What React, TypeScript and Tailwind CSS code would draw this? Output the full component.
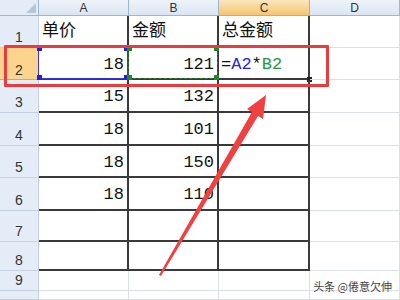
import React from 'react';

const cols = ['A', 'B', 'C', 'D'];
const rowHeights = [32, 32, 33, 33, 32, 33, 31, 29, 20, 9];

// содержимое ячеек A..C
const data: Record<number, string[]> = {
  1: ['单价', '金额', '总金额'],
  2: ['18', '121', ''],
  3: ['15', '132', ''],
  4: ['18', '101', ''],
  5: ['18', '150', ''],
  6: ['18', '110', ''],
};

const mono = { fontFamily: '"Liberation Mono", "DejaVu Sans Mono", monospace' };
const cjk = { fontFamily: '"Noto Sans CJK SC", "Noto Sans", sans-serif' };
const head = { fontFamily: '"Liberation Sans", Arial, sans-serif' };

function Handle({ className }: { className: string }) {
  return <span className={`absolute h-[5px] w-[5px] ${className}`} />;
}

// рамка ссылки из формулы, лежит поверх ячейки
function RefFrame({ frame, dot }: { frame: string; dot: string }) {
  return (
    <span className={`pointer-events-none absolute inset-[-1px] ${frame}`}>
      <Handle className={`left-[-2px] top-[-2px] ${dot}`} />
      <Handle className={`right-[-2px] top-[-2px] ${dot}`} />
      <Handle className={`left-[-2px] bottom-[-2px] ${dot}`} />
      <Handle className={`right-[-2px] bottom-[-2px] ${dot}`} />
    </span>
  );
}

export default function App() {
  return (
    <div className="relative h-[300px] w-[400px] overflow-hidden bg-white">
      <div
        className="grid grid-cols-[39px_90px_90px_91px_90px]"
        style={{ gridTemplateRows: `16px ${rowHeights.map((h) => h + 'px').join(' ')}` }}
      >
        <div className="flex items-end justify-end border-b border-r border-[#9eb6ce] bg-[#e4ecf7] p-[2px]">
          <svg width="10" height="10" viewBox="0 0 10 10">
            <polygon points="10,0 10,10 0,10" fill="#b4c6dc" />
          </svg>
        </div>
        {cols.map((c) => (
          <div
            key={c}
            className={
              c === 'C'
                ? 'flex items-center justify-center border-b border-r border-[#e0a74a] bg-gradient-to-b from-[#fbe6bd] to-[#f6c56e] text-[12px] text-[#333]'
                : 'flex items-center justify-center border-b border-r border-[#9eb6ce] bg-gradient-to-b from-[#eef3fa] to-[#dbe5f2] text-[12px] text-[#333]'
            }
            style={head}
          >
            {c}
          </div>
        ))}

        {rowHeights.map((_, i) => {
          const r = i + 1;
          const row = data[r];
          return (
            <React.Fragment key={r}>
              <div
                className={
                  r === 2
                    ? 'flex items-end justify-center overflow-hidden border-b border-r border-[#e0a74a] bg-[#fcd48e] pb-[2px] text-[14px] leading-none text-[#333]'
                    : 'flex items-end justify-center overflow-hidden border-b border-r border-[#c3d1e3] bg-[#e4ecf7] pb-[3px] text-[14px] leading-none text-[#333]'
                }
                style={head}
              >
                {r <= 9 ? r : ''}
              </div>
              {cols.map((c, ci) => {
                const boxed = ci < 3 && r <= 8;
                const cls = boxed
                  ? 'relative flex border-b-2 border-r-2 border-[#3a3a3a]'
                  : 'relative flex border-b border-r border-[#dadfe8]';
                const val = row && ci < 3 ? row[ci] : '';
                if (r === 1 && ci < 3) {
                  return (
                    <div key={c} className={`${cls} items-end pb-[5px] pl-[3px] text-[17px] text-[#111]`} style={cjk}>
                      {val}
                    </div>
                  );
                }
                if (r === 2 && c === 'C') {
                  return (
                    <div key={c} className={`${cls} items-center pl-[2px] pt-[3px] text-[17px]`} style={mono}>
                      <span className="text-[#111]">=</span>
                      <span className="text-[#2323e6]">A2</span>
                      <span className="text-[#111]">*</span>
                      <span className="text-[#1f9a3a]">B2</span>
                      <Handle className="bottom-[-4px] right-[-4px] bg-[#222]" />
                    </div>
                  );
                }
                return (
                  <div
                    key={c}
                    className={`${cls} items-center justify-end pr-[3px] pt-[3px] text-[17px] text-[#111]`}
                    style={mono}
                  >
                    {val}
                    {r === 2 && c === 'A' && <RefFrame frame="border border-[#3535f0]" dot="bg-[#2020e0]" />}
                    {r === 2 && c === 'B' && (
                      <RefFrame frame="border border-dashed border-[#2d7a2d]" dot="bg-[#1f8a2a]" />
                    )}
                  </div>
                );
              })}
            </React.Fragment>
          );
        })}
      </div>

      {/* красная рамка поверх строки 2 */}
      <div className="pointer-events-none absolute left-[4px] top-[45px] h-[42px] w-[325px] rounded-[1px] border-[3px] border-[#ea3c3f]" />

      {/* стрелка */}
      <svg className="pointer-events-none absolute inset-0" width="400" height="300" viewBox="0 0 400 300">
        <polygon points="266,95 263,119 258,116 161,276 159,275 252,112 247,109" fill="#f04040" />
      </svg>

      {/* водяной знак */}
      <div
        className="absolute bottom-[8px] right-[8px] text-[11px] leading-none text-[#444] [text-shadow:0_0_2px_#fff]"
        style={cjk}
      >
        头条 @倦意欠伸
      </div>
    </div>
  );
}
